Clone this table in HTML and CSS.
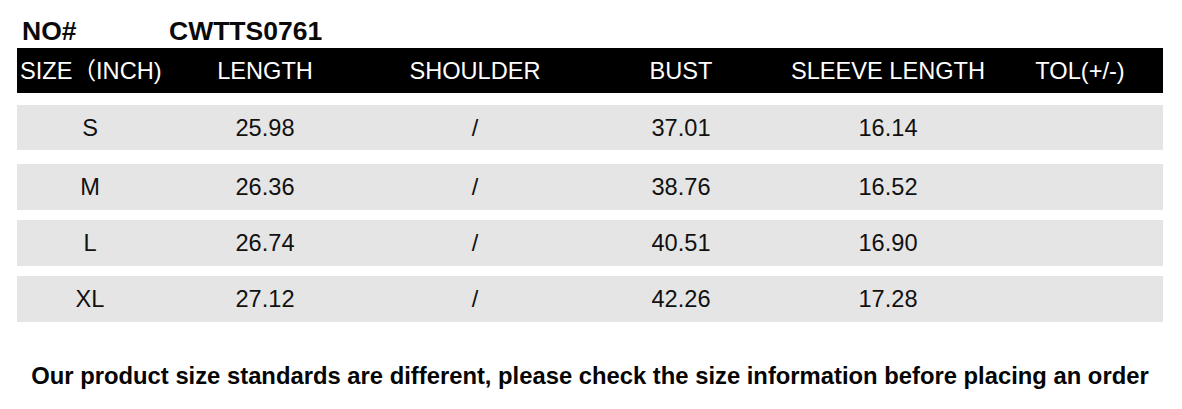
FILE: index.html
```html
<!DOCTYPE html>
<html lang="en">
<head>
<meta charset="utf-8">
<title>Size chart CWTTS0761</title>
<link rel="stylesheet" href="styles.css">
</head>
<body>
<div class="page">
  <div class="title">
    <span class="title-label">NO#</span>
    <span class="title-code">CWTTS0761</span>
  </div>
  <div class="table">
    <div class="row head">
      <div class="cell c-size">SIZE（INCH)</div>
      <div class="cell">LENGTH</div>
      <div class="cell">SHOULDER</div>
      <div class="cell">BUST</div>
      <div class="cell">SLEEVE LENGTH</div>
      <div class="cell">TOL(+/-)</div>
    </div>
    <div class="row body first">
      <div class="cell">S</div>
      <div class="cell">25.98</div>
      <div class="cell">/</div>
      <div class="cell">37.01</div>
      <div class="cell">16.14</div>
      <div class="cell"></div>
    </div>
    <div class="row body second">
      <div class="cell">M</div>
      <div class="cell">26.36</div>
      <div class="cell">/</div>
      <div class="cell">38.76</div>
      <div class="cell">16.52</div>
      <div class="cell"></div>
    </div>
    <div class="row body">
      <div class="cell">L</div>
      <div class="cell">26.74</div>
      <div class="cell">/</div>
      <div class="cell">40.51</div>
      <div class="cell">16.90</div>
      <div class="cell"></div>
    </div>
    <div class="row body">
      <div class="cell">XL</div>
      <div class="cell">27.12</div>
      <div class="cell">/</div>
      <div class="cell">42.26</div>
      <div class="cell">17.28</div>
      <div class="cell"></div>
    </div>
  </div>
  <p class="note">Our product size standards are different, please check the size information before placing an order</p>
</div>
</body>
</html>
```

FILE: styles.css
```css
html, body {
  margin: 0;
  padding: 0;
  background: #ffffff;
}

body {
  font-family: "Liberation Sans", Arial, "Noto Sans CJK SC", sans-serif;
  color: #000000;
  width: 1182px;
  height: 409px;
  overflow: hidden;
}

.page {
  padding: 0 19px 0 17px;
}

.title {
  display: flex;
  height: 30px;
  padding-top: 16px;
  margin-bottom: 2px;
  font-size: 26.5px;
  line-height: 30px;
  font-weight: bold;
  color: #0a0a0a;
}

.title-label {
  margin-left: 5px;
  width: 147px;
}

.table {
  display: flex;
  flex-direction: column;
  width: 1146px;
}

.row {
  display: grid;
  grid-template-columns: 146px 204px 216px 196px 218px 166px;
  height: 46px;
  align-items: center;
  font-size: 23.6px;
  line-height: 26px;
}

.head {
  background: #000000;
  color: #ffffff;
  height: 45px;
}

.body {
  background: #e5e5e5;
  color: #111111;
  margin-top: 10px;
}

.body.first {
  margin-top: 12px;
  height: 45px;
}

.body.second {
  margin-top: 14px;
}

.cell {
  text-align: center;
  white-space: nowrap;
}

.head .c-size {
  text-align: left;
  padding-left: 3px;
}

.note {
  margin: 40px 0 0 0;
  width: 1146px;
  text-align: center;
  font-size: 23.8px;
  line-height: 27px;
  font-weight: bold;
  color: #050505;
}
```
